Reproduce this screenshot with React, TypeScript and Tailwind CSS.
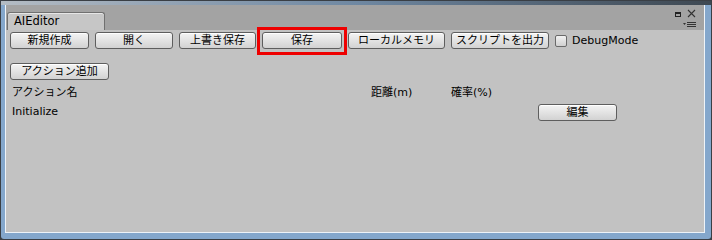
import React from "react";

const font = { fontFamily: '"DejaVu Sans", "Noto Sans CJK JP", sans-serif' };

function Btn({ label, w }: { label: string; w: string }) {
  return (
    <div
      className={`${w} h-[17px] flex items-center justify-center rounded-[3px] border border-[#5e5e5e] bg-gradient-to-b from-[#f4f4f4] to-[#d2d2d2] text-[11px] leading-none text-black shadow-[inset_0_1px_0_#ffffff]`}
    >
      {label}
    </div>
  );
}

export default function App() {
  return (
    <div
      className="w-[712px] h-[240px] bg-[#3a3f45] p-px"
      style={font}
    >
      <div className="w-full h-full flex flex-col bg-[#84a7cc] rounded-[3px]">
        {/* top strip */}
        <div className="h-[4px] bg-gradient-to-r from-[#b4bcc4] via-[#6f88a2] to-[#3e4852]" />
        <div className="flex-1 flex flex-col pl-[4px] pr-[6px] pb-[6px]">
          <div className="flex-1 flex flex-col border-l border-r border-b border-[#eef3f8]">
            {/* tab bar */}
            <div className="h-[25px] bg-[#a3a3a3] flex items-end relative">
              <div className="ml-[1px] w-[98px] h-[18px] rounded-t-[3px] border border-b-0 border-[#707070] bg-[#c6c6c6] shadow-[inset_0_1px_0_#e6e6e6] flex items-center pl-[6px] text-[11.5px] text-black">
                AIEditor
              </div>
              <div className="flex-1" />
              <div className="absolute right-[5px] top-[4px] w-[26px] h-[20px]">
                <svg width="26" height="20" viewBox="0 0 26 20">
                  <rect x="2.5" y="3.5" width="5" height="4" fill="none" stroke="#222" strokeWidth="1" />
                  <rect x="2" y="3" width="6" height="2" fill="#222" />
                  <path d="M15 1 L22 8 M22 1 L15 8" stroke="#333" strokeWidth="1.1" />
                  <path d="M10 14 L13 14 L11.5 16 Z" fill="#333" />
                  <rect x="14" y="13" width="9" height="1" fill="#333" />
                  <rect x="14" y="15" width="9" height="1" fill="#333" />
                  <rect x="14" y="17" width="9" height="1" fill="#333" />
                </svg>
              </div>
            </div>
            {/* panel */}
            <div className="flex-1 bg-[#c2c2c2] pt-[2px] pl-[4px] flex flex-col text-[11px] text-black relative">
              <div className="flex items-center gap-[6px]">
                <Btn label="新規作成" w="w-[79px]" />
                <Btn label="開く" w="w-[78px]" />
                <Btn label="上書き保存" w="w-[77px]" />
                <div className="relative">
                  <Btn label="保存" w="w-[80px]" />
                  <div className="absolute left-[-5px] top-[-5px] w-[90px] h-[28px] border-[3px] border-[#ee0000]" />
                </div>
                <Btn label="ローカルメモリ" w="w-[97px]" />
                <Btn label="スクリプトを出力" w="w-[98px]" />
                <div className="flex items-center ml-[0px]">
                  <div className="w-[12px] h-[12px] rounded-[2px] border border-[#6a6a6a] bg-gradient-to-b from-[#f2f2f2] to-[#d0d0d0]" />
                  <span className="ml-[5px] leading-none">DebugMode</span>
                </div>
              </div>
              <div className="mt-[14px] flex">
                <Btn label="アクション追加" w="w-[99px]" />
              </div>
              <div className="mt-[5px] h-[16px] flex items-center pl-[2px]">
                <span className="w-[359px]">アクション名</span>
                <span className="w-[80px]">距離(m)</span>
                <span>確率(%)</span>
              </div>
              <div className="mt-[2px] h-[18px] flex items-center pl-[2px]">
                <span className="w-[526px]">Initialize</span>
                <Btn label="編集" w="w-[79px]" />
              </div>
            </div>
          </div>
        </div>
      </div>
    </div>
  );
}
